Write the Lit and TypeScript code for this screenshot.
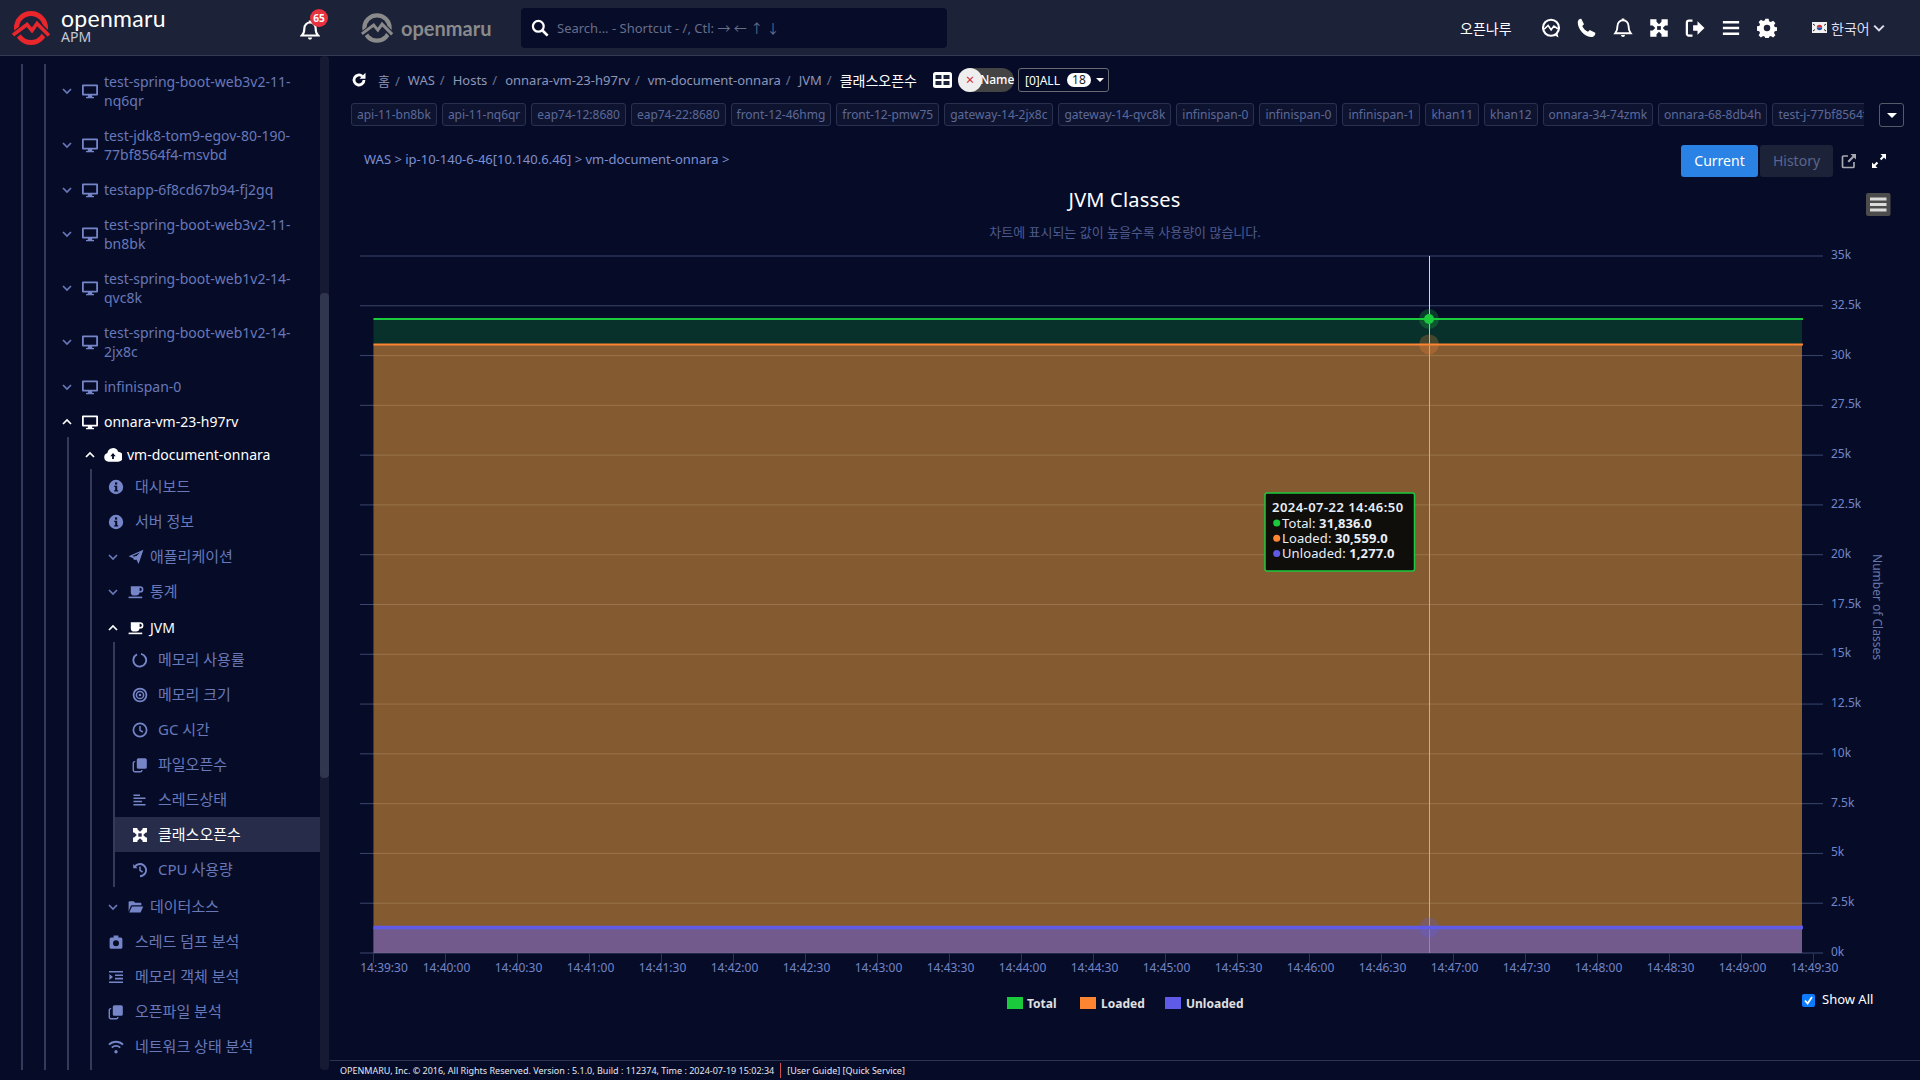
import { LitElement, html, css, svg } from 'lit';
import { customElement } from 'lit/decorators.js';

// ── icons (16x16 unless noted) ──
const ic = (body: unknown, cls = 'ic') => html`<svg class=${cls} viewBox="0 0 16 16" fill="currentColor">${body}</svg>`;

const ICONS: Record<string, unknown> = {
  desktop: svg`<path fill-rule="evenodd" d="M1 1.5h14a1 1 0 0 1 1 1v9a1 1 0 0 1-1 1h-5l.4 1.6H12v1.2H4v-1.2h1.6L6 12.5H1a1 1 0 0 1-1-1v-9a1 1 0 0 1 1-1zM1.8 3.3v7.4h12.4V3.3z"/>`,
  cloud: svg`<path d="M4 14a4 4 0 0 1-1-7.8A5 5 0 0 1 12.6 5 4.5 4.5 0 0 1 12.5 14z"/><path d="M8 6.2 10.4 9H8.800v2.600H7.200V9H5.600z" fill="#060c28"/>`,
  info: svg`<circle cx="8" cy="8" r="7.2"/><rect x="7" y="3.4" width="2.2" height="2.2" fill="#060c28"/><path d="M6.200 6.800h3v4.400h1v1.200H6.200v-1.200h1V8h-1z" fill="#060c28"/>`,
  plane: svg`<path d="M15.400.8 10.600 15 8.400 10.600a2 2 0 0 1-3.200-1.400L.6 7.200zM12 3.600 4.400 7l1.800.8a2 2 0 0 1 2-.6z"/>`,
  coffee: svg`<path fill-rule="evenodd" d="M2.800 2.200h9.400a3 3 0 0 1 0 6.400h-.6A3.600 3.600 0 0 1 8 11.600H6.200a3.400 3.400 0 0 1-3.400-3.400zm8.800 1.500v3.300h.6a1.650 1.650 0 0 0 0-3.300z"/><rect x=".6" y="12.600" width="13.600" height="1.600"/>`,
  ring: svg`<path d="M9 1.900A6.400 6.400 0 1 1 5 2.400" fill="none" stroke="currentColor" stroke-width="1.9"/>`,
  target: svg`<circle cx="8" cy="8" r="6.400" fill="none" stroke="currentColor" stroke-width="1.8"/><circle cx="8" cy="8" r="3.600" fill="none" stroke="currentColor" stroke-width="1.5"/><circle cx="8" cy="8" r="1.300"/>`,
  clock: svg`<circle cx="8" cy="8" r="6.600" fill="none" stroke="currentColor" stroke-width="1.7"/><path d="M8 4v4.400l2.800 1.600" fill="none" stroke="currentColor" stroke-width="1.5"/>`,
  copy: svg`<path d="M6.400 1.200h6.800a1.600 1.600 0 0 1 1.600 1.600v7.400a1.600 1.600 0 0 1-1.600 1.600H6.400a1.600 1.600 0 0 1-1.600-1.600V2.800a1.600 1.600 0 0 1 1.600-1.600z"/><path d="M3.200 4.600H2.800a1.500 1.500 0 0 0-1.500 1.500v7.200a1.500 1.500 0 0 0 1.500 1.500h5.600a1.500 1.500 0 0 0 1.500-1.500v-.2" fill="none" stroke="currentColor" stroke-width="1.4"/>`,
  align: svg`<path d="M1.500 2.400h6.500v1.500H1.500zM1.500 5.600h12v1.500h-12zM1.500 8.800h8.500v1.500H1.500zM1.500 12h12v1.500h-12z"/>`,
  cross: svg`<path d="M1 1h4.400v1.200l2.600 2.600 2.600-2.600V1H15v4.400h-1.200L11.200 8l2.600 2.600H15V15h-4.400v-1.200L8 11.200l-2.600 2.600V15H1v-4.400h1.200L4.800 8 2.200 5.400H1z"/><path d="M6.300 6.300h3.400v3.400H6.300z" fill="#272c4a"/>`,
  history: svg`<path d="M2.600 3.400 1.200 1.900v4.400h4.400L4 4.700A5.200 5.200 0 1 1 8 13.300v1.900A7.100 7.100 0 1 0 2.600 3.400z"/><path d="M8 4.400v4l2.600 1.600" fill="none" stroke="currentColor" stroke-width="1.5"/>`,
  folder: svg`<path d="M.6 3.200a1 1 0 0 1 1-1h4l1.500 1.600h5.300a1 1 0 0 1 1 1v1.400H4.200a1.600 1.600 0 0 0-1.500 1L.6 12.400z"/><path d="M4 7.400h11.200l-2.600 6.200H1.200z"/>`,
  camera: svg`<path fill-rule="evenodd" d="M5.600 1.600h4.800v2h2.400a1.600 1.600 0 0 1 1.600 1.600v8a1.600 1.600 0 0 1-1.600 1.600H3.200a1.600 1.600 0 0 1-1.600-1.600v-8a1.600 1.600 0 0 1 1.600-1.600h2.400zM8 6.200a3 3 0 1 0 0 6 3 3 0 0 0 0-6z"/>`,
  indent: svg`<path d="M1 2h14v1.600H1zM7 5.400h8V7H7zM7 8.800h8v1.600H7zM1 12.400h14V14H1zM1.400 5l3.600 3-3.600 3z"/>`,
  wifi: svg`<path d="M8 11a1.700 1.700 0 1 1 0 3.400A1.700 1.700 0 0 1 8 11z"/><path d="M3.800 8.600a6 6 0 0 1 8.400 0M1 5.600a10 10 0 0 1 14 0" fill="none" stroke="currentColor" stroke-width="1.9"/>`,
};

const chev = (up = false) => html`<svg class="chev" viewBox="0 0 10 10"><path d=${up ? 'M1 7l4-4 4 4' : 'M1 3l4 4 4-4'} /></svg>`;

// hangul runs about a pixel larger than latin in this tree
const label = (t: string) => html`<span class="lb ${/[가-힣]/.test(t) ? 'kr' : ''}">${t}</span>`;

type Row = { t: string; icon: string; open?: boolean; on?: boolean };

const HOSTS: Row[] = [
  { t: 'test-spring-boot-web3v2-11-\nnq6qr', icon: 'desktop' },
  { t: 'test-jdk8-tom9-egov-80-190-\n77bf8564f4-msvbd', icon: 'desktop' },
  { t: 'testapp-6f8cd67b94-fj2gq', icon: 'desktop' },
  { t: 'test-spring-boot-web3v2-11-\nbn8bk', icon: 'desktop' },
  { t: 'test-spring-boot-web1v2-14-\nqvc8k', icon: 'desktop' },
  { t: 'test-spring-boot-web1v2-14-\n2jx8c', icon: 'desktop' },
  { t: 'infinispan-0', icon: 'desktop' },
];

const JVM_ROWS: Row[] = [
  { t: '메모리 사용률', icon: 'ring' },
  { t: '메모리 크기', icon: 'target' },
  { t: 'GC 시간', icon: 'clock' },
  { t: '파일오픈수', icon: 'copy' },
  { t: '스레드상태', icon: 'align' },
  { t: '클래스오픈수', icon: 'cross', on: true },
  { t: 'CPU 사용량', icon: 'history' },
];

const TOOL_ROWS: Row[] = [
  { t: '스레드 덤프 분석', icon: 'camera' },
  { t: '메모리 객체 분석', icon: 'indent' },
  { t: '오픈파일 분석', icon: 'copy' },
  { t: '네트워크 상태 분석', icon: 'wifi' },
];

const CRUMBS = ['홈', 'WAS', 'Hosts', 'onnara-vm-23-h97rv', 'vm-document-onnara', 'JVM'];

const TAGS = [
  'api-11-bn8bk', 'api-11-nq6qr', 'eap74-12:8680', 'eap74-22:8680', 'front-12-46hmg', 'front-12-pmw75',
  'gateway-14-2jx8c', 'gateway-14-qvc8k', 'infinispan-0', 'infinispan-0', 'infinispan-1', 'khan11', 'khan12',
  'onnara-34-74zmk', 'onnara-68-8db4h', 'test-j-77bf8564f4-msvbd',
];

// ── chart geometry, in page pixels ──
const PLOT = { x0: 373.5, x1: 1802, base: 953, top: 256, tickStep: 72 };
const yOf = (v: number) => PLOT.base - (v / 35000) * (PLOT.base - PLOT.top);
const CROSS_X = 1429.5;
const SERIES = [
  { name: 'Total', v: 31836, color: '#1ac93c', alpha: 0.2, w: 2, val: '31,836.0' },
  { name: 'Loaded', v: 30559, color: '#ff8533', alpha: 0.5, w: 2, val: '30,559.0' },
  { name: 'Unloaded', v: 1277, color: '#5f5be8', alpha: 0.5, w: 3.5, val: '1,277.0' },
];
const timeLabel = (i: number) => {
  const sec = 14 * 3600 + 39 * 60 + 30 + i * 30;
  const p = (n: number) => String(n).padStart(2, '0');
  return `${p(Math.floor(sec / 3600))}:${p(Math.floor(sec / 60) % 60)}:${p(sec % 60)}`;
};

@customElement('app-root')
export class AppRoot extends LitElement {
  static styles = css`
    :host {
      display: block;
      width: 1920px;
      height: 1080px;
      overflow: hidden;
      background: #060c28;
      color: #6878b8;
      font-family: 'Noto Sans', 'Noto Sans CJK KR', sans-serif;
      font-size: 14px;
    }
    svg { display: block; flex: none; }

    /* ── header ── */
    .top {
      height: 55px;
      background: #1c2238;
      border-bottom: 1px solid #343a54;
      display: flex;
      align-items: center;
      color: #fff;
    }
    .logo { width: 38px; height: 38px; margin-left: 12px; }
    .brand { margin-left: 11px; width: 120px; margin-top: -3px; }
    .brand b { display: block; font: 400 23px/22px Lato, sans-serif; letter-spacing: 0.3px; color: #fff; }
    .brand span { display: block; font-size: 14px; line-height: 16px; color: #c4c8d4; }
    .alarm { position: relative; width: 20px; height: 20px; margin-left: 119px; margin-top: 4px; color: #fff; }
    .alarm svg { width: 20px; height: 20px; }
    .badge {
      position: absolute; left: 10px; top: -11px;
      width: 18px; height: 18px; border-radius: 50%;
      background: #e8323f; color: #fff;
      font-size: 10px; font-weight: 700; line-height: 18px; text-align: center;
    }
    .logo2 { width: 32px; height: 32px; margin-left: 41px; color: #8a8a8a; }
    .brand2 { margin-left: 8px; width: 90px; font: 700 20px/24px Lato, sans-serif; color: #8a8a8a; }
    .search {
      margin-left: 30px;
      width: 426px; height: 40px;
      background: #070c28; border-radius: 4px;
      display: flex; align-items: center;
      font-size: 13px; color: #666e8c;
    }
    .search svg { width: 18px; height: 18px; margin: 0 8px 0 10px; color: #fff; }
    .who { margin-left: 513px; width: 52px; font-size: 14px; color: #fff; }
    .tools { margin-left: 29px; display: flex; gap: 16px; }
    .tools svg { width: 20px; height: 20px; }
    .lang { margin-left: 35px; display: flex; align-items: center; font-size: 14px; color: #dde; }
    .lang .flag { width: 15px; height: 11px; margin-right: 4px; }
    .lang .chev { margin-left: 3px; width: 12px; height: 12px; }
    .lang .chev path { stroke: #dde; }

    /* ── page ── */
    .page { display: flex; height: 1024px; }
    .side { width: 330px; height: 1014px; display: flex; flex: none; }
    .tree { width: 320px; overflow: hidden; padding-left: 21px; box-sizing: border-box; }
    .track { width: 9px; background: #161b33; border-radius: 4px; padding-top: 237px; box-sizing: border-box; }
    .thumb { height: 485px; background: #30364e; border-radius: 4px; }

    .nest { border-left: 2px solid #343a5c; }
    .nest.a { padding-left: 21px; }
    .nest.b { margin-top: 8px; }
    .nest.c { margin-left: 21px; margin-top: -2px; }
    .nest.d { margin-left: 21px; margin-top: -3px; padding-bottom: 10px; }
    .nest.e { margin-left: 21px; margin-top: -3px; }

    .row { display: flex; align-items: center; padding: 8px 0 8px 16px; line-height: 19px; }
    .row .lb { white-space: pre-line; }
    .row .lb.kr { font-size: 15px; }
    .chev { width: 10px; height: 10px; }
    .chev path { fill: none; stroke: currentColor; stroke-width: 1.7; }
    .ic { width: 16px; height: 16px; color: #7585c8; }

    .host .ic { margin: 0 6px 0 10px; }
    .row.sel { color: #fff; }
    .row.sel .ic, .row.sel .chev { color: #fff; }
    .vm .ic { width: 18px; height: 18px; margin: 0 5px 0 9px; }
    .leaf .ic { margin-right: 11px; }
    .fold .ic { margin: 0 6px 0 10px; }
    .fold.jvm { margin-top: 1px; }
    .fold.ds { margin-top: 2px; }
    .sub { padding-left: 17px; }
    .sub .ic { margin-right: 10px; }
    .sub.on { background: #272c4a; color: #fff; }
    .sub.on .ic { color: #fff; }

    /* ── main column ── */
    .main { flex: 1; display: flex; flex-direction: column; min-width: 0; }
    .crumbs { display: flex; align-items: center; height: 24px; margin-top: 12px; padding-left: 21px; font-size: 13px; color: #8d96b8; }
    .crumbs .reload { width: 16px; height: 16px; color: #fff; margin-right: 11px; }
    .crumb::after { content: '/'; margin: 0 8px 0 5px; color: #6a7392; }
    .crumb.last { color: #fff; margin-right: 16px; font-size: 14px; }
    .crumb.last::after { content: none; }
    .gridbtn { width: 19px; height: 16px; margin-right: 6px; }
    .toggle {
      position: relative; width: 56px; height: 24px; border-radius: 12px; background: #444;
      color: #fff; font-size: 12px; font-weight: 500; line-height: 24px; padding-left: 22px; box-sizing: border-box;
      margin-right: 4px;
    }
    .knob {
      position: absolute; left: 0; top: 0; width: 24px; height: 24px; border-radius: 50%;
      background: #eee; color: #d0303c; font-size: 15px; font-weight: 400; line-height: 23px; text-align: center;
    }
    .select {
      display: flex; align-items: center; width: 91px; height: 24px; box-sizing: border-box;
      border: 1px solid #6a6a72; border-radius: 3px; color: #fff; font-size: 12px; padding-left: 6px;
    }
    .select i {
      font-style: normal; width: 24px; height: 14px; line-height: 14px; margin-left: 7px; margin-right: 5px;
      background: #fff; color: #222; border-radius: 7px; text-align: center;
    }
    .caret { width: 0; height: 0; border: 4px solid transparent; border-top: 4px solid #fff; border-bottom: 0; }
    .more .caret { border-width: 5px 5px 0; border-top-color: #fff; }

    .tagbar { display: flex; align-items: flex-start; margin-top: 11px; padding-left: 21px; }
    .tags { width: 1513px; display: flex; gap: 5px; overflow: hidden; flex: none; }
    .tag {
      flex: none; height: 23px; line-height: 21px; box-sizing: border-box; padding: 0 5px;
      border: 1px solid #2a3050; border-radius: 3px; background: #0e1430;
      font-size: 12px; letter-spacing: -0.02px; color: #5c6998;
    }
    .more {
      margin-left: 15px; width: 25px; height: 24px; box-sizing: border-box;
      border: 1px solid #555a68; border-radius: 3px;
      display: flex; align-items: center; justify-content: center;
    }

    .pathrow { display: flex; align-items: center; height: 32px; margin-top: 18px; padding: 0 33px 0 34px; }
    .path { flex: 1; font-size: 13px; color: #7f8fd0; margin-top: -4px; }
    .btn { height: 32px; line-height: 32px; font-size: 14px; text-align: center; border-radius: 3px; }
    .btn.cur { width: 77px; background: #2a82e4; color: #fff; margin-right: 2px; }
    .btn.his { width: 73px; background: #1c2238; color: #5a6590; }
    .ext { width: 16px; height: 16px; color: #a8a8b0; margin-left: 8px; }
    .exp { width: 16px; height: 16px; color: #fff; margin-left: 14px; }

    .chart { width: 1590px; height: 880px; margin-top: 3px; }
    .ttl { font-size: 20px; fill: #fff; text-anchor: middle; letter-spacing: 0.2px; }
    .subttl { font-size: 13px; fill: #4e5a8c; text-anchor: middle; }
    .ylab { font-size: 12px; fill: #7385c8; }
    .xlab { font-size: 12px; fill: #7385c8; text-anchor: middle; }
    .ytitle { font-size: 12px; fill: #6677aa; text-anchor: middle; }
    .leg { font-size: 12px; font-weight: 700; fill: #e0e0e0; }
    .showall { font-size: 13px; fill: #fff; }
    .tipt { font-size: 13px; font-weight: 600; fill: #e8eef8; letter-spacing: 0.45px; }
    .tipn { font-size: 13px; fill: #e8eef8; letter-spacing: 0.1px; }
    .tipn tspan { font-weight: 700; }

    .foot {
      height: 20px; border-top: 1px solid #2c3250; box-sizing: border-box;
      display: flex; align-items: center; padding-left: 10px;
      font-size: 9px; color: #e4e6ee;
    }
    .foot em { font-style: normal; border-left: 1px solid #d05050; margin-left: 6px; padding-left: 6px; height: 15px; line-height: 15px; }
  `;

  private hostRow(r: Row, open = false) {
    return html`<div class="row host ${open ? 'sel' : ''}">${chev(open)}${ic(ICONS[r.icon])}${label(r.t)}</div>`;
  }

  private leaf(r: Row) {
    return html`<div class="row leaf">${ic(ICONS[r.icon])}${label(r.t)}</div>`;
  }

  private fold(t: string, icon: string, extra = '', open = false) {
    return html`<div class="row fold ${extra} ${open ? 'sel' : ''}">${chev(open)}${ic(ICONS[icon])}${label(t)}</div>`;
  }

  private renderTree() {
    return html`<div class="tree">
      <div class="nest a">
        <div class="nest b">
          ${HOSTS.map((r) => this.hostRow(r))}
          ${this.hostRow({ t: 'onnara-vm-23-h97rv', icon: 'desktop' }, true)}
          <div class="nest c">
            <div class="row vm sel">${chev(true)}${ic(ICONS.cloud)}${label('vm-document-onnara')}</div>
            <div class="nest d">
              ${this.leaf({ t: '대시보드', icon: 'info' })}
              ${this.leaf({ t: '서버 정보', icon: 'info' })}
              ${this.fold('애플리케이션', 'plane')}
              ${this.fold('통계', 'coffee')}
              ${this.fold('JVM', 'coffee', 'jvm', true)}
              <div class="nest e">
                ${JVM_ROWS.map((r) => html`<div class="row sub ${r.on ? 'on' : ''}">${ic(ICONS[r.icon])}${label(r.t)}</div>`)}
              </div>
              ${this.fold('데이터소스', 'folder', 'ds')}
              ${TOOL_ROWS.map((r) => this.leaf(r))}
            </div>
          </div>
        </div>
      </div>
    </div>`;
  }

  private renderChart() {
    const ys = Array.from({ length: 15 }, (_, i) => i * 2500);
    const xs = Array.from({ length: 21 }, (_, i) => i);
    const w = PLOT.x1 - PLOT.x0;
    return svg`<svg class="chart" viewBox="330 180 1590 880">
      <text class="ttl" x="1124.500" y="207">JVM Classes</text>
      <text class="subttl" x="1125" y="237">차트에 표시되는 값이 높을수록 사용량이 많습니다.</text>
      <rect x="1866" y="193" width="24.500" height="23" rx="2" fill="#4c4c4c"/>
      <path d="M1870 197.500h16.500v3h-16.500zM1870 203h16.500v3h-16.500zM1870 208.500h16.500v3h-16.500z" fill="#dcdcdc"/>

      ${ys.map((v) => svg`
        <line x1="360" x2="1823" y1=${yOf(v)} y2=${yOf(v)} stroke="#3a466c" stroke-width="1"/>
        <text class="ylab" x="1831" y=${yOf(v) + 3}>${v === 0 ? '0k' : `${v / 1000}k`}</text>`)}
      ${xs.map((i) => {
        const x = PLOT.x0 + i * PLOT.tickStep;
        return svg`
        <line x1=${x} x2=${x} y1=${PLOT.base} y2="963" stroke="#2c3354"/>
        <text class="xlab" x=${i === 0 ? 384 : x + 1} y="972">${timeLabel(i)}</text>`;
      })}
      <text class="ytitle" transform="translate(1873 607) rotate(90)">Number of Classes</text>

      <line x1=${CROSS_X} x2=${CROSS_X} y1=${PLOT.top} y2=${PLOT.base} stroke="#d2d4da"/>
      ${SERIES.map((s) => svg`<rect x=${PLOT.x0} y=${yOf(s.v)} width=${w} height=${PLOT.base - yOf(s.v)} fill=${s.color} fill-opacity=${s.alpha}/>`)}
      ${SERIES.map((s) => svg`<line x1=${PLOT.x0} x2=${PLOT.x1 + 1} y1=${yOf(s.v)} y2=${yOf(s.v)} stroke=${s.color} stroke-width=${s.w}/>`)}
      ${SERIES.map((s) => svg`<circle cx=${CROSS_X - 0.5} cy=${yOf(s.v)} r="10" fill=${s.color} fill-opacity="0.25"/>`)}
      <circle cx=${CROSS_X - 0.5} cy=${yOf(31836)} r="5" fill="#1ac93c"/>

      <rect x="1265" y="493" width="149.500" height="78" rx="2" fill="#100e0a" stroke="#1ac93c" stroke-width="1.500"/>
      <text class="tipt" x="1272" y="512">2024-07-22 14:46:50</text>
      ${SERIES.map((s, i) => svg`
        <circle cx="1276.700" cy=${523 + i * 15.2} r="3.500" fill=${s.color}/>
        <text class="tipn" x="1282" y=${527.5 + i * 15.2}>${s.name}: <tspan>${s.val}</tspan></text>`)}

      <rect x="1007" y="997" width="16" height="12" fill="#1ac93c"/>
      <text class="leg" x="1027" y="1008">Total</text>
      <rect x="1080" y="997" width="16" height="12" fill="#ff8533"/>
      <text class="leg" x="1101" y="1008">Loaded</text>
      <rect x="1165" y="997" width="16" height="12" fill="#5f5be8"/>
      <text class="leg" x="1186" y="1008">Unloaded</text>

      <rect x="1802" y="994" width="13" height="13" rx="2" fill="#0d7bff"/>
      <path d="M1805 1000.500l2.600 3 4.400-6.500" fill="none" stroke="#fff" stroke-width="1.800"/>
      <text class="showall" x="1822" y="1004">Show All</text>
    </svg>`;
  }

  render() {
    return html`
      <div class="top">
        <svg class="logo" viewBox="0 0 38 38">
          <circle cx="19" cy="19" r="14.500" fill="none" stroke="#e8262c" stroke-width="5"/>
          <path d="M1 27 15 16l5 6 5-7 12 12" fill="none" stroke="#1c2238" stroke-width="7"/>
          <path d="M1 26 15 15.500l5 6 5-7 12 12" fill="none" stroke="#e8262c" stroke-width="3.600"/>
        </svg>
        <div class="brand"><b>openmaru</b><span>APM</span></div>
        <div class="alarm">
          ${ic(svg`<path d="M8 2a4.500 4.500 0 0 1 4.500 4.500c0 3.600 1 4.900 2 5.900H1.500c1-1 2-2.300 2-5.900A4.500 4.500 0 0 1 8 2z" fill="none" stroke="currentColor" stroke-width="1.700"/><path d="M7 .3h2v1.900H7zM6.300 14h3.400a1.700 1.700 0 0 1-3.400 0z"/>`, '')}
          <div class="badge">65</div>
        </div>
        <svg class="logo2" viewBox="0 0 38 38">
          <circle cx="19" cy="19" r="15" fill="none" stroke="currentColor" stroke-width="5"/>
          <path d="M1 27 15 16l5 6 5-7 12 12" fill="none" stroke="#1c2238" stroke-width="7"/>
          <path d="M1 26 15 15.500l5 6 5-7 12 12" fill="none" stroke="currentColor" stroke-width="3.600"/>
        </svg>
        <div class="brand2">openmaru</div>
        <div class="search">
          <svg viewBox="0 0 16 16"><circle cx="6.500" cy="6.500" r="4.800" fill="none" stroke="currentColor" stroke-width="2"/><path d="M10 10l4.800 4.800" stroke="currentColor" stroke-width="2.400"/></svg>
          Search... - Shortcut - /, Ctl: → ← ↑ ↓
        </div>
        <div class="who">오픈나루</div>
        <div class="tools">
          ${ic(svg`<circle cx="8" cy="7.800" r="6.400" fill="none" stroke="currentColor" stroke-width="1.700"/><path d="M2.500 9l3.200-3 2.400 3.400 2.200-3 3.200 2.200" fill="none" stroke="currentColor" stroke-width="1.300"/><path d="M10.500 13.500l3.500 2-1-3.500z"/>`, '')}
          ${ic(svg`<path d="M3.400.6 5.600 5 4.200 6.400c.8 2 2.600 3.800 4.600 4.600l1.400-1.400 4.400 2.200c.3 1.500-1 3.400-2.800 3.400C6 15.200.6 9 .6 3.400.6 1.800 2 .4 3.400.6z"/>`, '')}
          ${ic(svg`<path d="M8 1.800a4.400 4.400 0 0 1 4.400 4.400c0 3.800 1 5 1.800 6H1.800c.8-1 1.800-2.200 1.800-6A4.400 4.400 0 0 1 8 1.800z" fill="none" stroke="currentColor" stroke-width="1.500"/><path d="M7 .4h2v1.800H7zM6.400 13.600h3.200a1.600 1.600 0 0 1-3.200 0z"/>`, '')}
          ${ic(svg`<path d="M1 1h5v2L8 5l2-2V1h5v5h-2l-2 2 2 2h2v5h-5v-2l-2-2-2 2v2H1v-5h2l2-2-2-2H1z"/><path d="M6.500 6.500h3v3h-3z" fill="#1c2238"/>`, '')}
          ${ic(svg`<path d="M6 2H3a1.500 1.500 0 0 0-1.500 1.500v9A1.500 1.500 0 0 0 3 14h3" fill="none" stroke="currentColor" stroke-width="1.800"/><path d="M6.500 5.800h3.500V2.600l5.600 5.400-5.600 5.400v-3.200H6.500z"/>`, '')}
          ${ic(svg`<path d="M1.500 2.400h13v1.900h-13zM1.500 7h13v1.900h-13zM1.500 11.600h13v1.900h-13z"/>`, '')}
          ${ic(svg`<path fill-rule="evenodd" d="M6.700.6h2.600l.4 2 1.400.6 1.800-1.100 1.800 1.800-1.100 1.800.6 1.400 2 .4v2.600l-2 .4-.6 1.400 1.100 1.800-1.800 1.800-1.800-1.100-1.400.6-.4 2H6.700l-.4-2-1.400-.6-1.800 1.100-1.800-1.800 1.100-1.800-.6-1.400-2-.4V6.700l2-.4.6-1.400-1.100-1.800 1.800-1.800 1.800 1.100 1.400-.6zM8 5.400a2.600 2.600 0 1 0 0 5.200 2.600 2.600 0 0 0 0-5.200z"/>`, '')}
        </div>
        <div class="lang">
          <svg class="flag" viewBox="0 0 15 11">
            <rect width="15" height="11" fill="#f2f2f2"/>
            <path d="M4.800 5.500a2.700 2.700 0 0 1 5.400 0z" fill="#d0303c"/>
            <path d="M4.800 5.500a2.700 2.700 0 0 0 5.400 0z" fill="#2450a8"/>
            <path d="M1 2l2 1.500M1 9l2-1.500M14 2l-2 1.500M14 9l-2-1.500" stroke="#222" stroke-width="1"/>
          </svg>
          한국어
          <svg class="chev" viewBox="0 0 10 10"><path d="M1 3l4 4 4-4"/></svg>
        </div>
      </div>

      <div class="page">
        <div class="side">
          ${this.renderTree()}
          <div class="track"><div class="thumb"></div></div>
        </div>
        <div class="main">
          <div class="crumbs">
            ${ic(svg`<path d="M13 8a5 5 0 1 1-1.700-3.800" fill="none" stroke="currentColor" stroke-width="2.800"/><path d="M14.500 .8v6h-6z"/>`, 'reload')}
            ${CRUMBS.map((c) => html`<span class="crumb">${c}</span>`)}
            <span class="crumb last">클래스오픈수</span>
            <svg class="gridbtn" viewBox="0 0 19 16">
              <rect width="19" height="16" rx="2.500" fill="#fff"/>
              <path d="M2.500 3h6v4h-6zM10.500 3h6v4h-6zM2.500 9h6v4h-6zM10.500 9h6v4h-6z" fill="#1c2238"/>
            </svg>
            <div class="toggle">Name<div class="knob">×</div></div>
            <div class="select">[0]ALL<i>18</i><span class="caret"></span></div>
          </div>
          <div class="tagbar">
            <div class="tags">${TAGS.map((t) => html`<span class="tag">${t}</span>`)}</div>
            <div class="more"><span class="caret"></span></div>
          </div>
          <div class="pathrow">
            <div class="path">WAS &gt; ip-10-140-6-46[10.140.6.46] &gt; vm-document-onnara &gt;</div>
            <div class="btn cur">Current</div>
            <div class="btn his">History</div>
            ${ic(svg`<path d="M7 3H2.500A1 1 0 0 0 1.500 4v9.500a1 1 0 0 0 1 1H12a1 1 0 0 0 1-1V9" fill="none" stroke="currentColor" stroke-width="1.700"/><path d="M9.500 1h5.500v5.500l-2-2L8 9.500 6.500 8l5-5z"/>`, 'ext')}
            ${ic(svg`<path d="M9.500 1H15v5.500l-2-2-2.700 2.700-1.500-1.500L11.500 3zM6.500 15H1V9.500l2 2 2.700-2.700 1.500 1.500L4.500 13z"/>`, 'exp')}
          </div>
          ${this.renderChart()}
          <div class="foot">
            OPENMARU, Inc. © 2016, All Rights Reserved. Version : 5.1.0, Build : 112374, Time : 2024-07-19 15:02:34
            <em>[User Guide] [Quick Service]</em>
          </div>
        </div>
      </div>
    `;
  }
}
